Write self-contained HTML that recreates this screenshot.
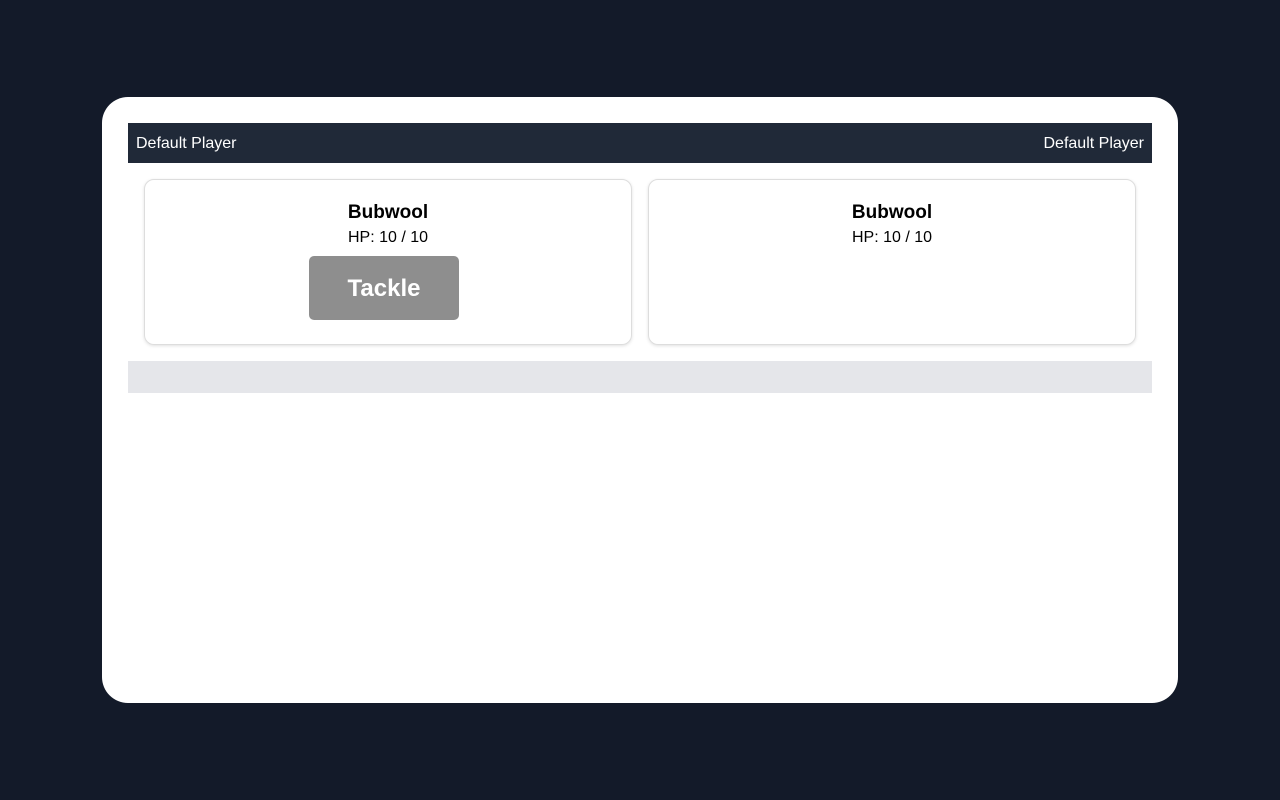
<!DOCTYPE html>
<html><head><style>
html,body{margin:0;padding:0;}
body{width:1280px;height:800px;background:#131a29;font-family:"Liberation Sans",sans-serif;position:relative;overflow:hidden;}
.card{position:absolute;left:102px;top:97px;width:1076px;height:606px;background:#fff;border-radius:26px;}
.bar{position:absolute;left:26px;top:26px;width:1024px;height:40px;background:#202938;color:#fff;font-size:16px;}
.bar .l{position:absolute;left:8px;top:12px}
.bar .r{position:absolute;right:8px;top:12px}
.p{position:absolute;top:82px;width:486px;height:164px;border:1px solid #ddd;border-radius:10px;box-shadow:0 1px 3px rgba(0,0,0,.12);text-align:center;}
.n{font-weight:bold;font-size:19px;margin-top:22px;}
.hp{font-size:16px;margin-top:5px;}
.btn{width:150px;height:64px;background:#8e8e8e;border-radius:5px;color:#fff;font-size:24px;font-weight:bold;line-height:66px;margin:9px auto 0;position:relative;left:-4px;}
.log{position:absolute;left:26px;top:264px;width:1024px;height:32px;background:#e5e6ea;}
</style></head><body>
<div class="card">
<div class="bar"><span class="l">Default Player</span><span class="r">Default Player</span></div>
<div class="p" style="left:42px"><div class="n">Bubwool</div><div class="hp">HP: 10 / 10</div><div class="btn">Tackle</div></div>
<div class="p" style="left:546px"><div class="n">Bubwool</div><div class="hp">HP: 10 / 10</div></div>
<div class="log"></div>
</div>
</body></html>
